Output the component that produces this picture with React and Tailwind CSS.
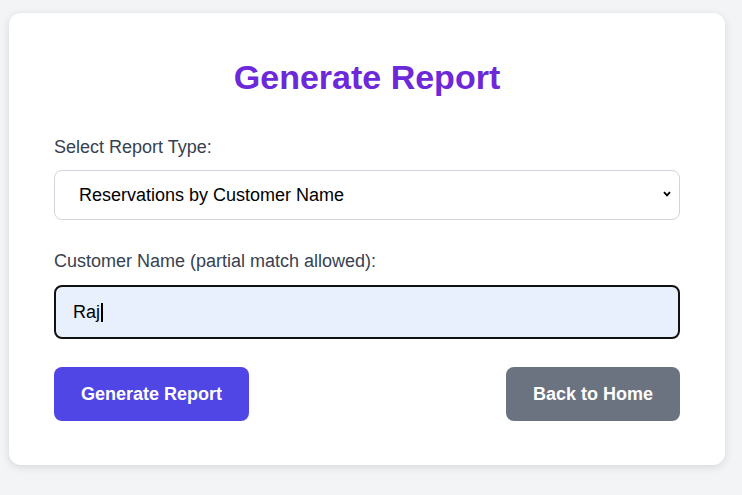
import React from 'react';

const Field = ({ label, children, className = '' }) => (
  <div className={className}>
    <div className="text-lg leading-6 text-[#374151]">{label}</div>
    {children}
  </div>
);

export default function App() {
  return (
    <div className="min-h-[495px] w-full bg-[#f3f4f6] pt-[13px] font-['Liberation_Sans',Arial,sans-serif]">
      <div className="ml-[9px] w-[716px] rounded-xl bg-white px-[45px] pt-[46px] pb-[44px] shadow-[0_2px_8px_rgba(0,0,0,0.12)]">
        <h1 className="text-center text-[34px] font-bold leading-9 text-[#6d28d9]">Generate Report</h1>

        <Field label="Select Report Type:" className="mt-10">
          <div className="relative mt-[11px]">
            <div className="flex h-[50px] items-center rounded-lg border border-[#d1d5db] bg-white pl-6 text-lg text-black">
              Reservations by Customer Name
            </div>
            <svg className="absolute right-[9px] top-[21px]" width="8" height="6" viewBox="0 0 8 6">
              <path d="M1 1.2 L4 4.4 L7 1.2" fill="none" stroke="#000" strokeWidth="1.8" />
            </svg>
          </div>
        </Field>

        <Field label="Customer Name (partial match allowed):" className="mt-[29px]">
          <div className="mt-3 flex h-[54px] items-center rounded-lg border-2 border-[#111] bg-[#e8f0fe] pl-[17px] text-lg text-black">
            Raj
            <span className="ml-[1px] inline-block h-[19px] w-[2px] bg-black" />
          </div>
        </Field>

        <div className="mt-7 flex items-center justify-between">
          <button className="h-[54px] w-[195px] rounded-lg bg-[#4f46e5] text-lg font-bold text-white">Generate Report</button>
          <button className="h-[54px] w-[174px] rounded-lg bg-[#6b7280] text-lg font-bold text-white">Back to Home</button>
        </div>
      </div>
    </div>
  );
}
